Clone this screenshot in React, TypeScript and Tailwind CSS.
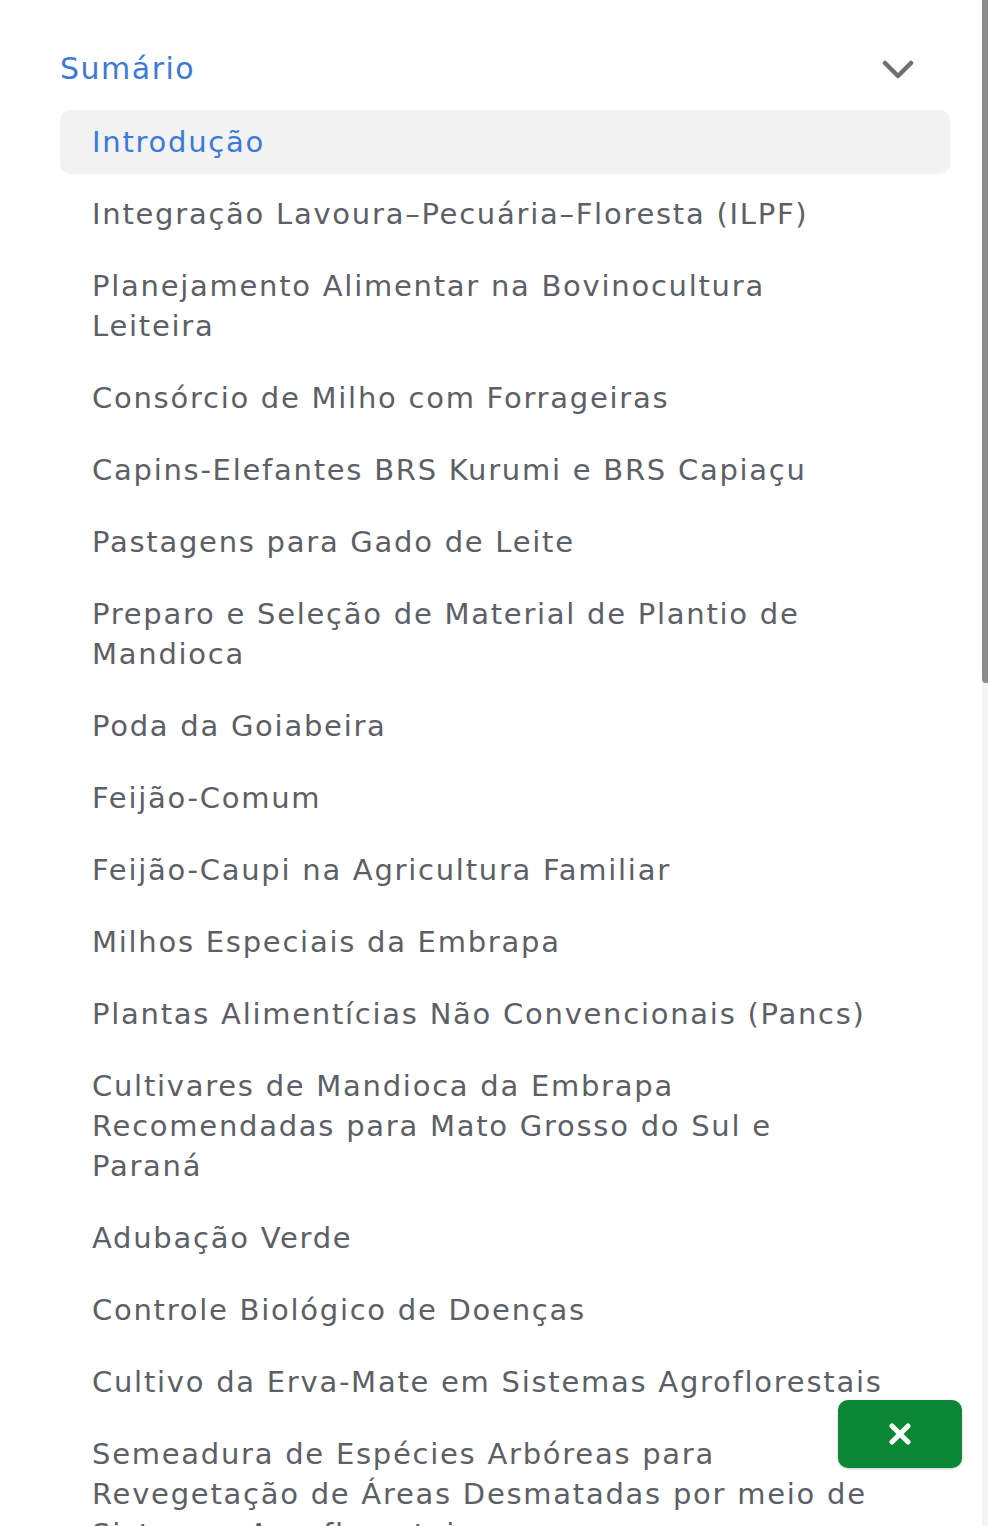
const items: string[][] = [
  ["Introdução"],
  ["Integração Lavoura–Pecuária–Floresta (ILPF)"],
  ["Planejamento Alimentar na Bovinocultura", "Leiteira"],
  ["Consórcio de Milho com Forrageiras"],
  ["Capins-Elefantes BRS Kurumi e BRS Capiaçu"],
  ["Pastagens para Gado de Leite"],
  ["Preparo e Seleção de Material de Plantio de", "Mandioca"],
  ["Poda da Goiabeira"],
  ["Feijão-Comum"],
  ["Feijão-Caupi na Agricultura Familiar"],
  ["Milhos Especiais da Embrapa"],
  ["Plantas Alimentícias Não Convencionais (Pancs)"],
  ["Cultivares de Mandioca da Embrapa", "Recomendadas para Mato Grosso do Sul e", "Paraná"],
  ["Adubação Verde"],
  ["Controle Biológico de Doenças"],
  ["Cultivo da Erva-Mate em Sistemas Agroflorestais"],
  ["Semeadura de Espécies Arbóreas para", "Revegetação de Áreas Desmatadas por meio de", "Sistemas Agroflorestais"],
];

export default function App() {
  return (
    <div className="h-[1526px] overflow-hidden bg-white flex font-['DejaVu_Sans',sans-serif]">
      <div className="flex-1 pl-[60px] pr-[32px] pt-[40px]">
        {/* cabeçalho do sumário */}
        <div className="flex items-center justify-between h-[56px] pr-[36px]">
          <span className="pt-[2px] text-[30px] leading-none text-[#3b7ad8] tracking-[0.05em]">Sumário</span>
          <svg className="mt-[4px]" width="32" height="20" viewBox="0 0 32 20" fill="none">
            <polyline
              points="3,3 16,16 29,3"
              stroke="#6f6f6f"
              strokeWidth="4.5"
              strokeLinecap="round"
              strokeLinejoin="round"
            />
          </svg>
        </div>

        <ul className="mt-[14px] flex flex-col gap-[8px]">
          {items.map((lines, i) => (
            <li
              key={i}
              className={
                i === 0
                  ? "rounded-[10px] bg-[#f2f2f2] px-[32px] py-[12px] text-[29px] leading-[40px] text-[#3b7ad8] tracking-[0.06em]"
                  : "rounded-[10px] px-[32px] py-[12px] text-[29px] leading-[40px] text-[#5c6066] tracking-[0.06em]"
              }
            >
              {lines.map((l, j) => (
                <span key={j} className="block whitespace-nowrap">
                  {l}
                </span>
              ))}
            </li>
          ))}
        </ul>
      </div>

      {/* barra de rolagem */}
      <div className="w-[6px] bg-[#f4f4f4]">
        <div className="h-[683px] bg-[#8a8a8a] rounded-bl-[4px]" />
      </div>

      <button className="fixed right-[26px] bottom-[58px] w-[124px] h-[68px] rounded-[10px] bg-[#098735] shadow-[0_1px_3px_rgba(0,0,0,0.2)] flex items-center justify-center">
        <svg width="24" height="22" viewBox="0 0 24 22" fill="none">
          <line x1="4" y1="3" x2="20" y2="19" stroke="white" strokeWidth="5" strokeLinecap="round" />
          <line x1="20" y1="3" x2="4" y2="19" stroke="white" strokeWidth="5" strokeLinecap="round" />
        </svg>
      </button>
    </div>
  );
}
